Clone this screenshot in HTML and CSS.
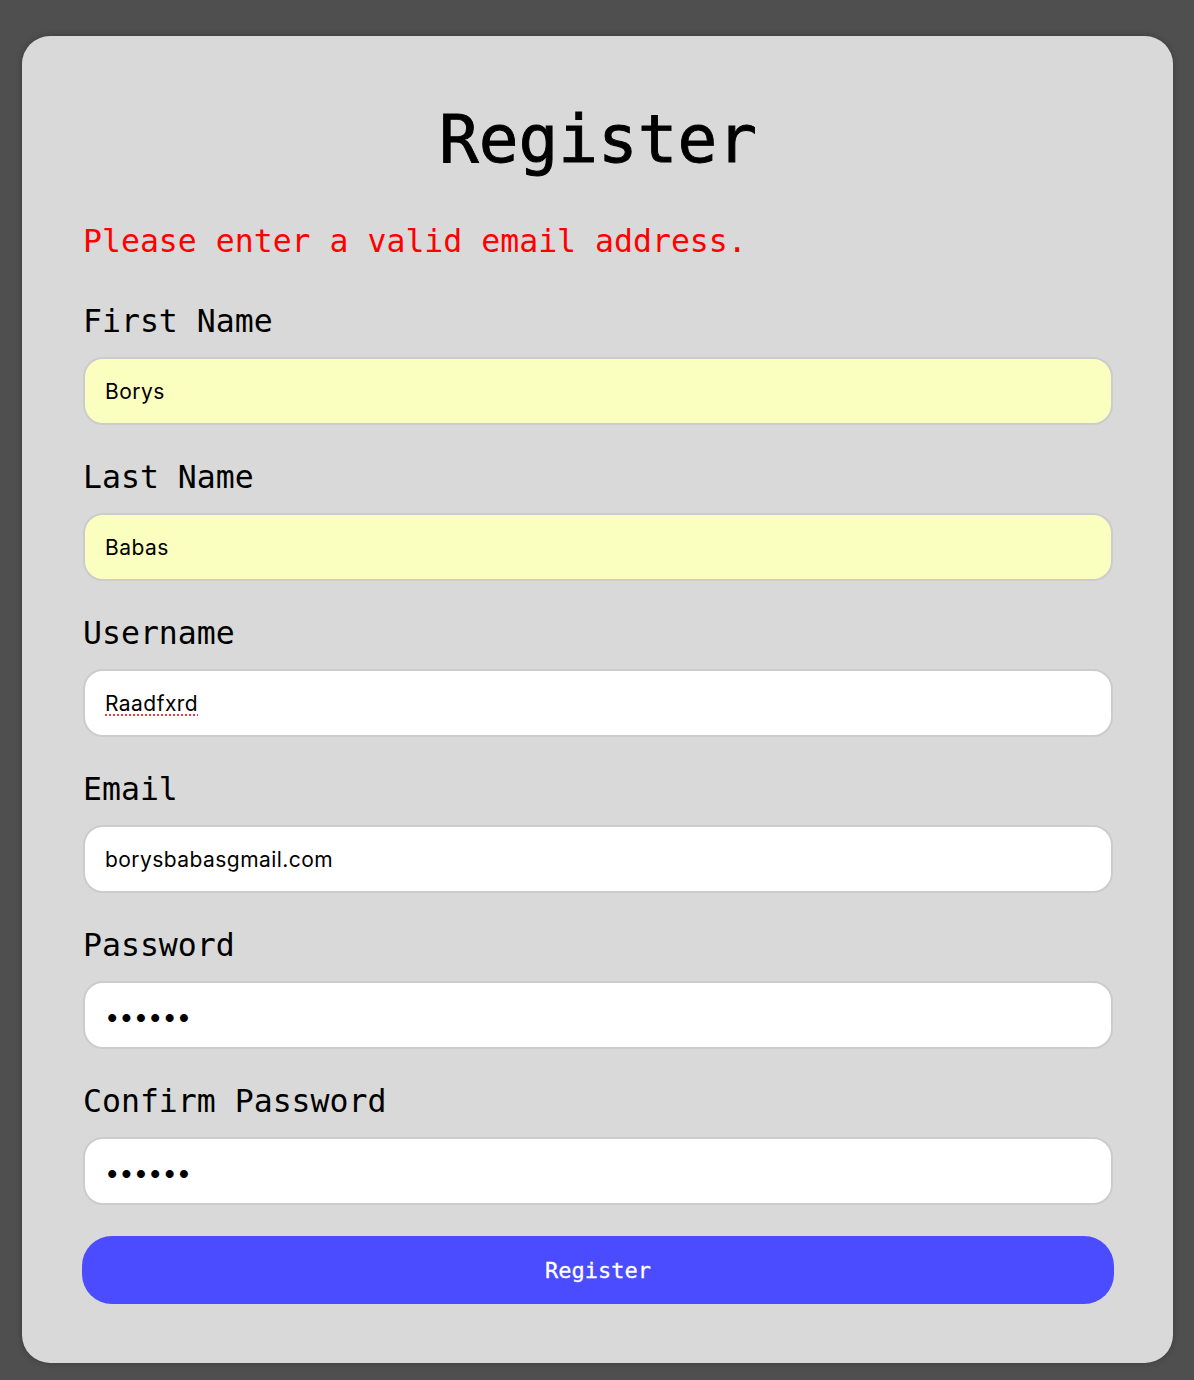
FILE: index.html
```html
<!DOCTYPE html>
<html lang="en">
<head>
<meta charset="utf-8">
<title>Register</title>
<link rel="stylesheet" href="styles.css">
</head>
<body>
<main class="page">
  <form class="card" novalidate>
    <h1 class="title">Register</h1>
    <p class="error">Please enter a valid email address.</p>
    <div class="field">
      <label class="label" for="first">First Name</label>
      <input class="input autofill" id="first" type="text" value="Borys">
    </div>
    <div class="field">
      <label class="label" for="last">Last Name</label>
      <input class="input autofill" id="last" type="text" value="Babas">
    </div>
    <div class="field">
      <label class="label" for="user">Username</label>
      <input class="input misspelled" id="user" type="text" value="Raadfxrd" spellcheck="false">
    </div>
    <div class="field">
      <label class="label" for="email">Email</label>
      <input class="input" id="email" type="text" value="borysbabasgmail.com">
    </div>
    <div class="field">
      <label class="label" for="pw">Password</label>
      <input class="input pw" id="pw" type="password" value="123456">
    </div>
    <div class="field">
      <label class="label" for="pw2">Confirm Password</label>
      <input class="input pw" id="pw2" type="password" value="123456">
    </div>
    <button class="button" type="button">Register</button>
  </form>
</main>
</body>
</html>
```
FILE: styles.css
```css
html, body {
  margin: 0;
  padding: 0;
  background: #4f4f4f;
}
.page {
  padding: 36px 21px 17px 22px;
}
.card {
  box-sizing: border-box;
  width: 1151px;
  background: #d9d9d9;
  border-radius: 28px;
  padding: 60px 60px 59px 61px;
  box-shadow: 0 0 6px rgba(0,0,0,0.25);
  font-family: "DejaVu Sans Mono", "Liberation Mono", monospace;
  color: #000;
}
.title {
  margin: 4px 0 43px;
  font-size: 66px;
  line-height: 79px;
  font-weight: 400;
  -webkit-text-stroke: 0.9px #000;
  text-align: center;
}
.error {
  margin: 0 0 42px;
  color: #ff0000;
  font-size: 31.5px;
  line-height: 38px;
}
.field {
  display: flex;
  flex-direction: column;
  margin-bottom: 33px;
}
.label {
  font-size: 31.5px;
  line-height: 38px;
  margin-bottom: 17px;
}
.input {
  box-sizing: border-box;
  width: 1030px;
  height: 68px;
  border: 2px solid #cccccc;
  border-radius: 20px;
  background: #ffffff;
  padding: 0 20px;
  font-family: Inter, "Liberation Sans", sans-serif;
  font-size: 21px;
  letter-spacing: 0.45px;
  color: #000;
  outline: none;
}
.autofill {
  background: #faffc0;
}
.misspelled {
  text-decoration: underline dotted #e0433a;
  text-underline-offset: 4px;
}
.pw {
  font-size: 25.5px;
  letter-spacing: 0;
}
.button {
  display: block;
  width: 1032px;
  height: 68px;
  margin: -2px 0 0 -1px;
  border: none;
  border-radius: 30px;
  background: #4b4bff;
  color: #ffffff;
  font-family: "DejaVu Sans Mono", "Liberation Mono", monospace;
  font-size: 22px;
  -webkit-text-stroke: 0.3px #fff;
  cursor: pointer;
}
```
